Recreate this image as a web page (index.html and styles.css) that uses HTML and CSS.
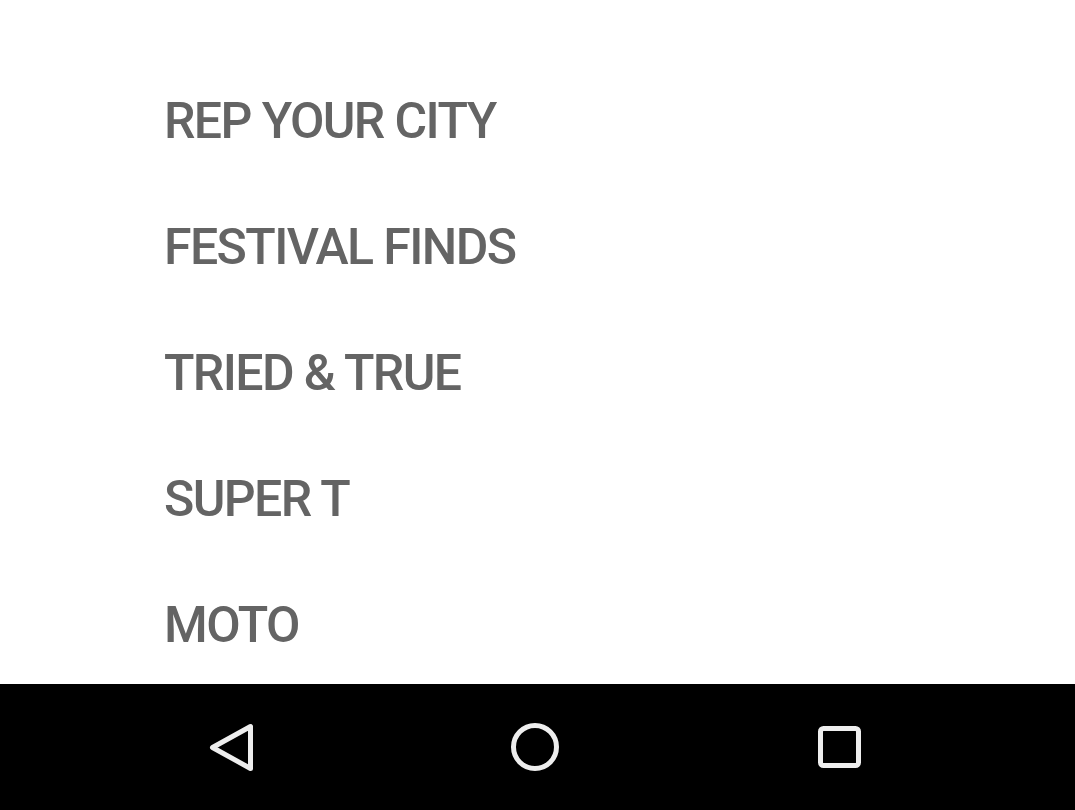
FILE: index.html
```html
<!DOCTYPE html>
<html>
<head>
<meta charset="utf-8">
<link rel="stylesheet" href="styles.css">
</head>
<body>
<div class="screen">
  <div class="content">
    <div class="cutoff"><span>SHOP BY COLLECTION</span></div>
    <ul class="menu">
      <li class="item">REP YOUR CITY</li>
      <li class="item">FESTIVAL FINDS</li>
      <li class="item">TRIED &amp; TRUE</li>
      <li class="item">SUPER T</li>
      <li class="item">MOTO</li>
    </ul>
  </div>
  <nav class="navbar">
    <svg class="nav-icon" width="60" height="60" viewBox="0 0 60 60">
      <path d="M50.5 9.5 L50.5 51.5 L12.5 30.5 Z" fill="none" stroke="#eeeeee" stroke-width="5" stroke-linejoin="round"/>
    </svg>
    <svg class="nav-icon" width="60" height="60" viewBox="0 0 60 60">
      <circle cx="30" cy="30" r="21.5" fill="none" stroke="#eeeeee" stroke-width="5"/>
    </svg>
    <svg class="nav-icon" width="60" height="60" viewBox="0 0 60 60">
      <rect x="10.5" y="11.5" width="38" height="37" rx="3" fill="none" stroke="#eeeeee" stroke-width="5"/>
    </svg>
  </nav>
</div>
</body>
</html>
```
FILE: styles.css
```css
* { box-sizing: border-box; }
html, body {
  margin: 0;
  padding: 0;
  background: #ffffff;
}
.screen {
  width: 1075px;
  height: 810px;
  display: flex;
  flex-direction: column;
  overflow: hidden;
}
.content {
  height: 684px;
  background: #ffffff;
  overflow: hidden;
}
.cutoff {
  height: 58px;
  padding-left: 40px;
  overflow: hidden;
}
.cutoff span {
  display: block;
  margin-top: -36px;
  font-family: Roboto, "Liberation Sans", sans-serif;
  font-weight: 500;
  font-size: 46px;
  line-height: 40px;
  letter-spacing: -1px;
  color: #e2e2e2;
}
.menu {
  list-style: none;
  margin: 0;
  padding: 0;
}
.item {
  height: 126px;
  line-height: 126px;
  padding-left: 164px;
  font-family: Roboto, "Liberation Sans", sans-serif;
  font-weight: 500;
  font-size: 50px;
  color: #646464;
  letter-spacing: -1.6px;
  white-space: nowrap;
}
.navbar {
  height: 126px;
  background: #000000;
  display: flex;
  align-items: center;
  justify-content: flex-start;
  gap: 245px;
  padding-left: 200px;
}
.nav-icon { display: block; }
```
